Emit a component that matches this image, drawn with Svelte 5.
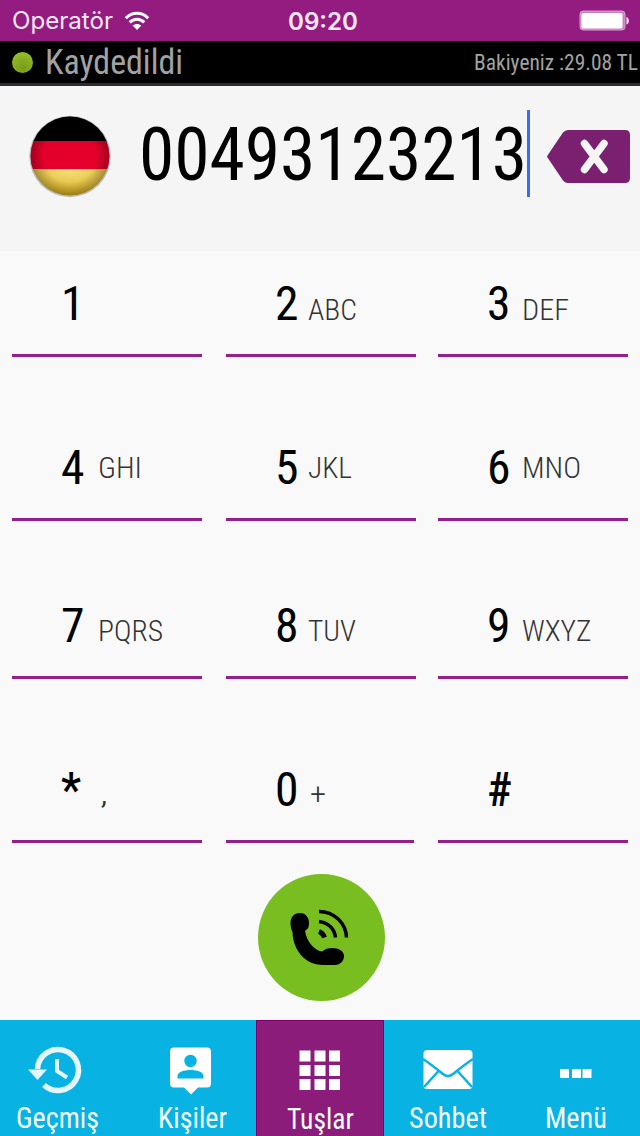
<script lang="ts">
	type Key = { digit: string; width?: number; letters?: string; lettersWidth?: number };

	const number = '00493123213';

	const rows: Key[][] = [
		[
			{ digit: '1' },
			{ digit: '2', letters: 'ABC', lettersWidth: 49 },
			{ digit: '3', letters: 'DEF', lettersWidth: 47 }
		],
		[
			{ digit: '4', letters: 'GHI', lettersWidth: 44 },
			{ digit: '5', letters: 'JKL', lettersWidth: 44 },
			{ digit: '6', letters: 'MNO', lettersWidth: 59 }
		],
		[
			{ digit: '7', letters: 'PQRS', lettersWidth: 65 },
			{ digit: '8', letters: 'TUV', lettersWidth: 48 },
			{ digit: '9', letters: 'WXYZ', lettersWidth: 69.5 }
		],
		[
			{ digit: '*', width: 20, letters: ',', lettersWidth: 8 },
			{ digit: '0', letters: '+', lettersWidth: 16 },
			{ digit: '#', width: 25 }
		]
	];

	const tabs = [
		{ id: 'history', label: 'Geçmiş', width: 83 },
		{ id: 'contacts', label: 'Kişiler', width: 69 },
		{ id: 'keys', label: 'Tuşlar', width: 67 },
		{ id: 'chat', label: 'Sohbet', width: 78 },
		{ id: 'menu', label: 'Menü', width: 62 }
	];

	let active = $state('keys');
</script>

<!-- condensed label: the box is as tall as the capitals, so its bottom edge is the baseline -->
{#snippet fit(text: string, width: number, height: number)}
	<svg class="fit" {width} {height}>
		<text x="0" y={height} textLength={width} lengthAdjust="spacingAndGlyphs">{text}</text>
	</svg>
{/snippet}

<div class="phone">
	<header class="status">
		<div class="carrier">
			{@render fit('Operatör', 101, 18)}
			<svg class="wifi" width="26" height="20" viewBox="0 0 26 20">
				<path d="M1.8 7.2C8.2.7 17.8.7 24.2 7.2" />
				<path d="M5.7 11.4c4.2-4.2 10.4-4.2 14.6 0" />
				<path class="dot" d="M8.6 14.6c2.5-2.3 6.3-2.3 8.8 0L13 19z" />
			</svg>
		</div>
		<div class="time">{@render fit('09:20', 70, 18)}</div>
		<svg class="battery" width="51" height="22" viewBox="0 0 51 22">
			<rect class="shell" x="1" y="1" width="45" height="19" rx="3" />
			<rect x="2.5" y="3" width="41" height="15.5" rx="1.5" />
			<path d="M47.5 7c3 1 3 6.5 0 7.5z" />
		</svg>
	</header>

	<div class="account">
		<span class="online"></span>
		<div class="state">{@render fit('Kaydedildi', 138, 24)}</div>
		<div class="balance">{@render fit('Bakiyeniz :29.08 TL', 164, 15)}</div>
	</div>

	<div class="entry">
		<svg class="flag" width="84" height="84" viewBox="0 0 84 84">
			<defs>
				<clipPath id="disc"><circle cx="42" cy="42" r="39.5" /></clipPath>
				<radialGradient id="shade" cx=".5" cy=".5" r=".5">
					<stop offset=".65" stop-color="#000" stop-opacity="0" />
					<stop offset="1" stop-color="#000" stop-opacity=".3" />
				</radialGradient>
				<radialGradient id="gold" cx=".5" cy=".1" r=".8">
					<stop offset="0" stop-color="#f4dc78" />
					<stop offset="1" stop-color="#dcb01c" />
				</radialGradient>
			</defs>
			<circle cx="42" cy="42.5" r="40.7" fill="#777" opacity=".45" />
			<g clip-path="url(#disc)">
				<rect width="84" height="27" />
				<rect y="27" width="84" height="28" fill="#e4002b" />
				<rect y="55" width="84" height="29" fill="url(#gold)" />
				<circle cx="42" cy="42" r="40" fill="url(#shade)" />
			</g>
		</svg>
		<div class="number">{@render fit(number, 388, 53)}</div>
		<span class="caret"></span>
		<svg class="erase" width="86" height="56" viewBox="0 0 86 56">
			<path
				class="tag"
				d="M1.5 26.5 17 3.5Q19 1 22 1H79q5 0 5 5V49q0 5-5 5H22q-3 0-5-2.500L1.5 28.5q-1-1 0-2z"
			/>
			<path class="cross" d="M38.5 14.5 58 40.5M58 14.5 38.5 40.5" />
		</svg>
	</div>

	<main class="pad">
		{#each rows as row, r}
			<div class="row row-{r}">
				{#each row as key}
					<button class="key">
						<span class="digit" class:symbol={key.digit === '*' || key.digit === '#'}>
							{@render fit(key.digit, key.width ?? 23.5, 34)}
						</span>
						{#if key.letters}
							<span class="letters">{@render fit(key.letters, key.lettersWidth ?? 40, 21)}</span>
						{/if}
					</button>
				{/each}
			</div>
		{/each}
	</main>

	<div class="dial">
		<button class="call" aria-label="Ara">
			<svg width="60" height="60" viewBox="0 0 60 60">
				<path
					d="M-1.500 15C-1.500 8 3 5 8 5c6 0 9 5 9 10 0 5-1.500 6-4 8 2 11 9 19 17 20.500 3-2.500 6-3.500 10-3.500 7 0 12 3 12 8 0 6-5 9-9 9H31C13 57 1 42 .500 24-1 21-1.500 18-1.500 15z"
				/>
				<path class="wave" d="M27 3.500C42 3.500 54 15 54.500 29.500M27 13.500c9 1 15.500 7 16.500 16" />
				<path class="wave wave-near" d="M27 23.500q4 1.500 5.500 6" />
			</svg>
		</button>
	</div>

	<nav class="tabs">
		{#each tabs as tab}
			<button class="tab" class:active={active === tab.id} onclick={() => (active = tab.id)}>
				<span class="icon">
					{#if tab.id === 'history'}
						<svg width="56" height="52" viewBox="0 0 56 52">
							<path class="line" d="M9.500 25A20.500 20.500 0 1 1 16 41" />
							<path d="M0 25.5H19L9.500 36z" />
							<path class="hand" d="M29 15V27l10 6.5" />
						</svg>
					{:else if tab.id === 'contacts'}
						<svg width="44" height="52" viewBox="0 0 44 52">
							<path d="M5 3.500H38q4 0 4 4V39.500q0 4-4 4H29l-7 7-7-7H5q-4 0-4-4V7.500q0-4 4-4z" />
							<circle class="cut" cx="21.5" cy="17" r="6.2" />
							<path class="cut" d="M8.500 34.5V32C8.500 24 34.500 24 34.500 32V34.500z" />
						</svg>
					{:else if tab.id === 'keys'}
						<svg width="42" height="52" viewBox="0 0 42 52">
							{#each [5.5, 20, 34] as y}
								{#each [0.5, 15.5, 30] as x}
									<rect {x} {y} width="11" height="11" />
								{/each}
							{/each}
						</svg>
					{:else if tab.id === 'chat'}
						<svg width="52" height="52" viewBox="0 0 52 52">
							<rect x="1.5" y="6" width="49" height="39" rx="3.5" />
							<path class="fold" d="M1 15C10 21 16 26 21 30q5 4 10 0C36 26 42 21 51 15M16.5 27 2 43M35.5 27 50 43" />
						</svg>
					{:else}
						<svg width="34" height="52" viewBox="0 0 34 52">
							<rect x="1" y="25" width="9" height="9" />
							<rect x="13" y="25" width="9" height="9" />
							<rect x="23.5" y="25" width="9" height="9" />
						</svg>
					{/if}
				</span>
				<span class="label">{@render fit(tab.label, tab.width, 21)}</span>
			</button>
		{/each}
	</nav>
</div>

<style>
	:global(body) {
		margin: 0;
	}

	.phone {
		width: 640px;
		height: 1136px;
		display: flex;
		flex-direction: column;
		overflow: hidden;
		background: #f9f9f9;
		font-family: 'Roboto Condensed', Roboto, sans-serif;
	}

	button {
		border: 0;
		padding: 0;
		background: none;
		font-family: inherit;
	}

	svg {
		display: block;
		flex: none;
		overflow: visible;
	}

	.fit {
		fill: currentColor;
	}

	.status {
		height: 41px;
		box-sizing: border-box;
		padding: 0 10px 0 12px;
		display: grid;
		grid-template-columns: 1fr auto 1fr;
		align-items: center;
		background: #941c80;
		color: #f8e8f6;
		font-family: Inter, sans-serif;
		font-size: 24px;
	}

	.carrier {
		display: flex;
		gap: 11px;
	}

	.wifi {
		fill: none;
		stroke: #fff;
		stroke-width: 3;
	}

	.wifi .dot {
		fill: #fff;
		stroke: none;
	}

	.time {
		padding-left: 3px;
		font-weight: 600;
	}

	.battery {
		justify-self: end;
		fill: #fff;
	}

	.battery .shell {
		fill: #c982bd;
		stroke: #d59dcc;
	}

	.account {
		height: 45px;
		box-sizing: border-box;
		padding: 0 2px 0 12px;
		display: flex;
		align-items: center;
		background: #000;
		border-bottom: 3px solid #292d30;
		color: #a2a2a2;
	}

	.online {
		width: 21px;
		height: 21px;
		border-radius: 50%;
		background: radial-gradient(circle at 55% 75%, #789a1b, #94bc25 75%);
	}

	.state {
		margin-left: 12px;
		font-size: 35px;
	}

	.balance {
		margin-left: auto;
		padding-top: 1px;
		font-size: 21.5px;
	}

	.entry {
		height: 165px;
		box-sizing: border-box;
		padding: 24px 8px 0 28px;
		display: flex;
		align-items: flex-start;
		background: #f5f5f5;
	}

	.flag {
		margin-top: 4px;
	}

	.number {
		margin: 17px 0 0 27px;
		font-size: 74.5px;
		color: #000;
	}

	.caret {
		width: 3px;
		height: 87px;
		background: #3c6cf0;
	}

	.erase {
		margin: 19px 0 0 16px;
	}

	.tag {
		fill: #7b2071;
	}

	.cross {
		stroke: #f5f5f5;
		stroke-width: 7.5;
		stroke-linecap: round;
	}

	.pad {
		height: 593px;
		display: grid;
		grid-template-rows: 106px 164px 158px 164px;
	}

	.row {
		padding-left: 12px;
		display: grid;
		grid-template-columns: 214px 212px 190px;
	}

	.key {
		width: 190px;
		box-sizing: border-box;
		padding: 0 0 34px 49px;
		display: flex;
		align-items: flex-end;
		border-bottom: 3px solid #96208a;
		color: #000;
	}

	.row-3 .key:nth-child(2) {
		width: 188px;
	}

	.digit {
		width: 37px;
		font-size: 48px;
	}

	.digit.symbol {
		font-weight: 500;
	}

	.key:nth-child(2) .digit {
		width: 33px;
	}

	.key:nth-child(3) .digit {
		width: 35px;
	}

	.letters {
		color: #333;
		font-size: 30px;
		font-weight: 300;
	}

	.row-1 .letters {
		padding-bottom: 6px;
	}

	.row-2 .letters {
		padding-bottom: 1px;
	}

	.row-3 .letters {
		padding: 0 0 2px 2px;
	}

	.dial {
		flex: 1;
		display: flex;
		justify-content: center;
		padding: 30px 0 0 3px;
	}

	.call {
		width: 127px;
		height: 127px;
		display: grid;
		place-items: center;
		border-radius: 50%;
		background: #78be20;
	}

	.wave {
		fill: none;
		stroke: #000;
		stroke-width: 3.5;
	}

	.wave-near {
		stroke-width: 5;
	}

	.tabs {
		height: 116px;
		display: grid;
		grid-template-columns: repeat(5, 1fr);
		background: #08b2e3;
	}

	.tab {
		display: flex;
		flex-direction: column;
		align-items: center;
		justify-content: flex-start;
		padding-top: 24px;
		color: #f2fbfe;
	}

	.tab.active {
		background: #8c1c7a;
		border: 1px solid #80006f;
		border-bottom: 0;
	}

	.tab:first-child {
		padding-right: 14px;
	}

	.icon {
		height: 52px;
		fill: #fff;
	}

	.tab:first-child .icon {
		margin-right: 2px;
		fill: #e5f7fd;
	}

	.tab:nth-child(2) .icon {
		margin-right: 2px;
	}

	.line,
	.hand {
		fill: none;
		stroke: #e5f7fd;
		stroke-width: 5.5;
	}

	.hand {
		stroke-width: 4;
	}

	.cut {
		fill: #08b2e3;
	}

	.fold {
		fill: none;
		stroke: #08b2e3;
		stroke-width: 2.5;
	}

	.label {
		margin-top: 11px;
		font-size: 29px;
		font-weight: 400;
	}
</style>
